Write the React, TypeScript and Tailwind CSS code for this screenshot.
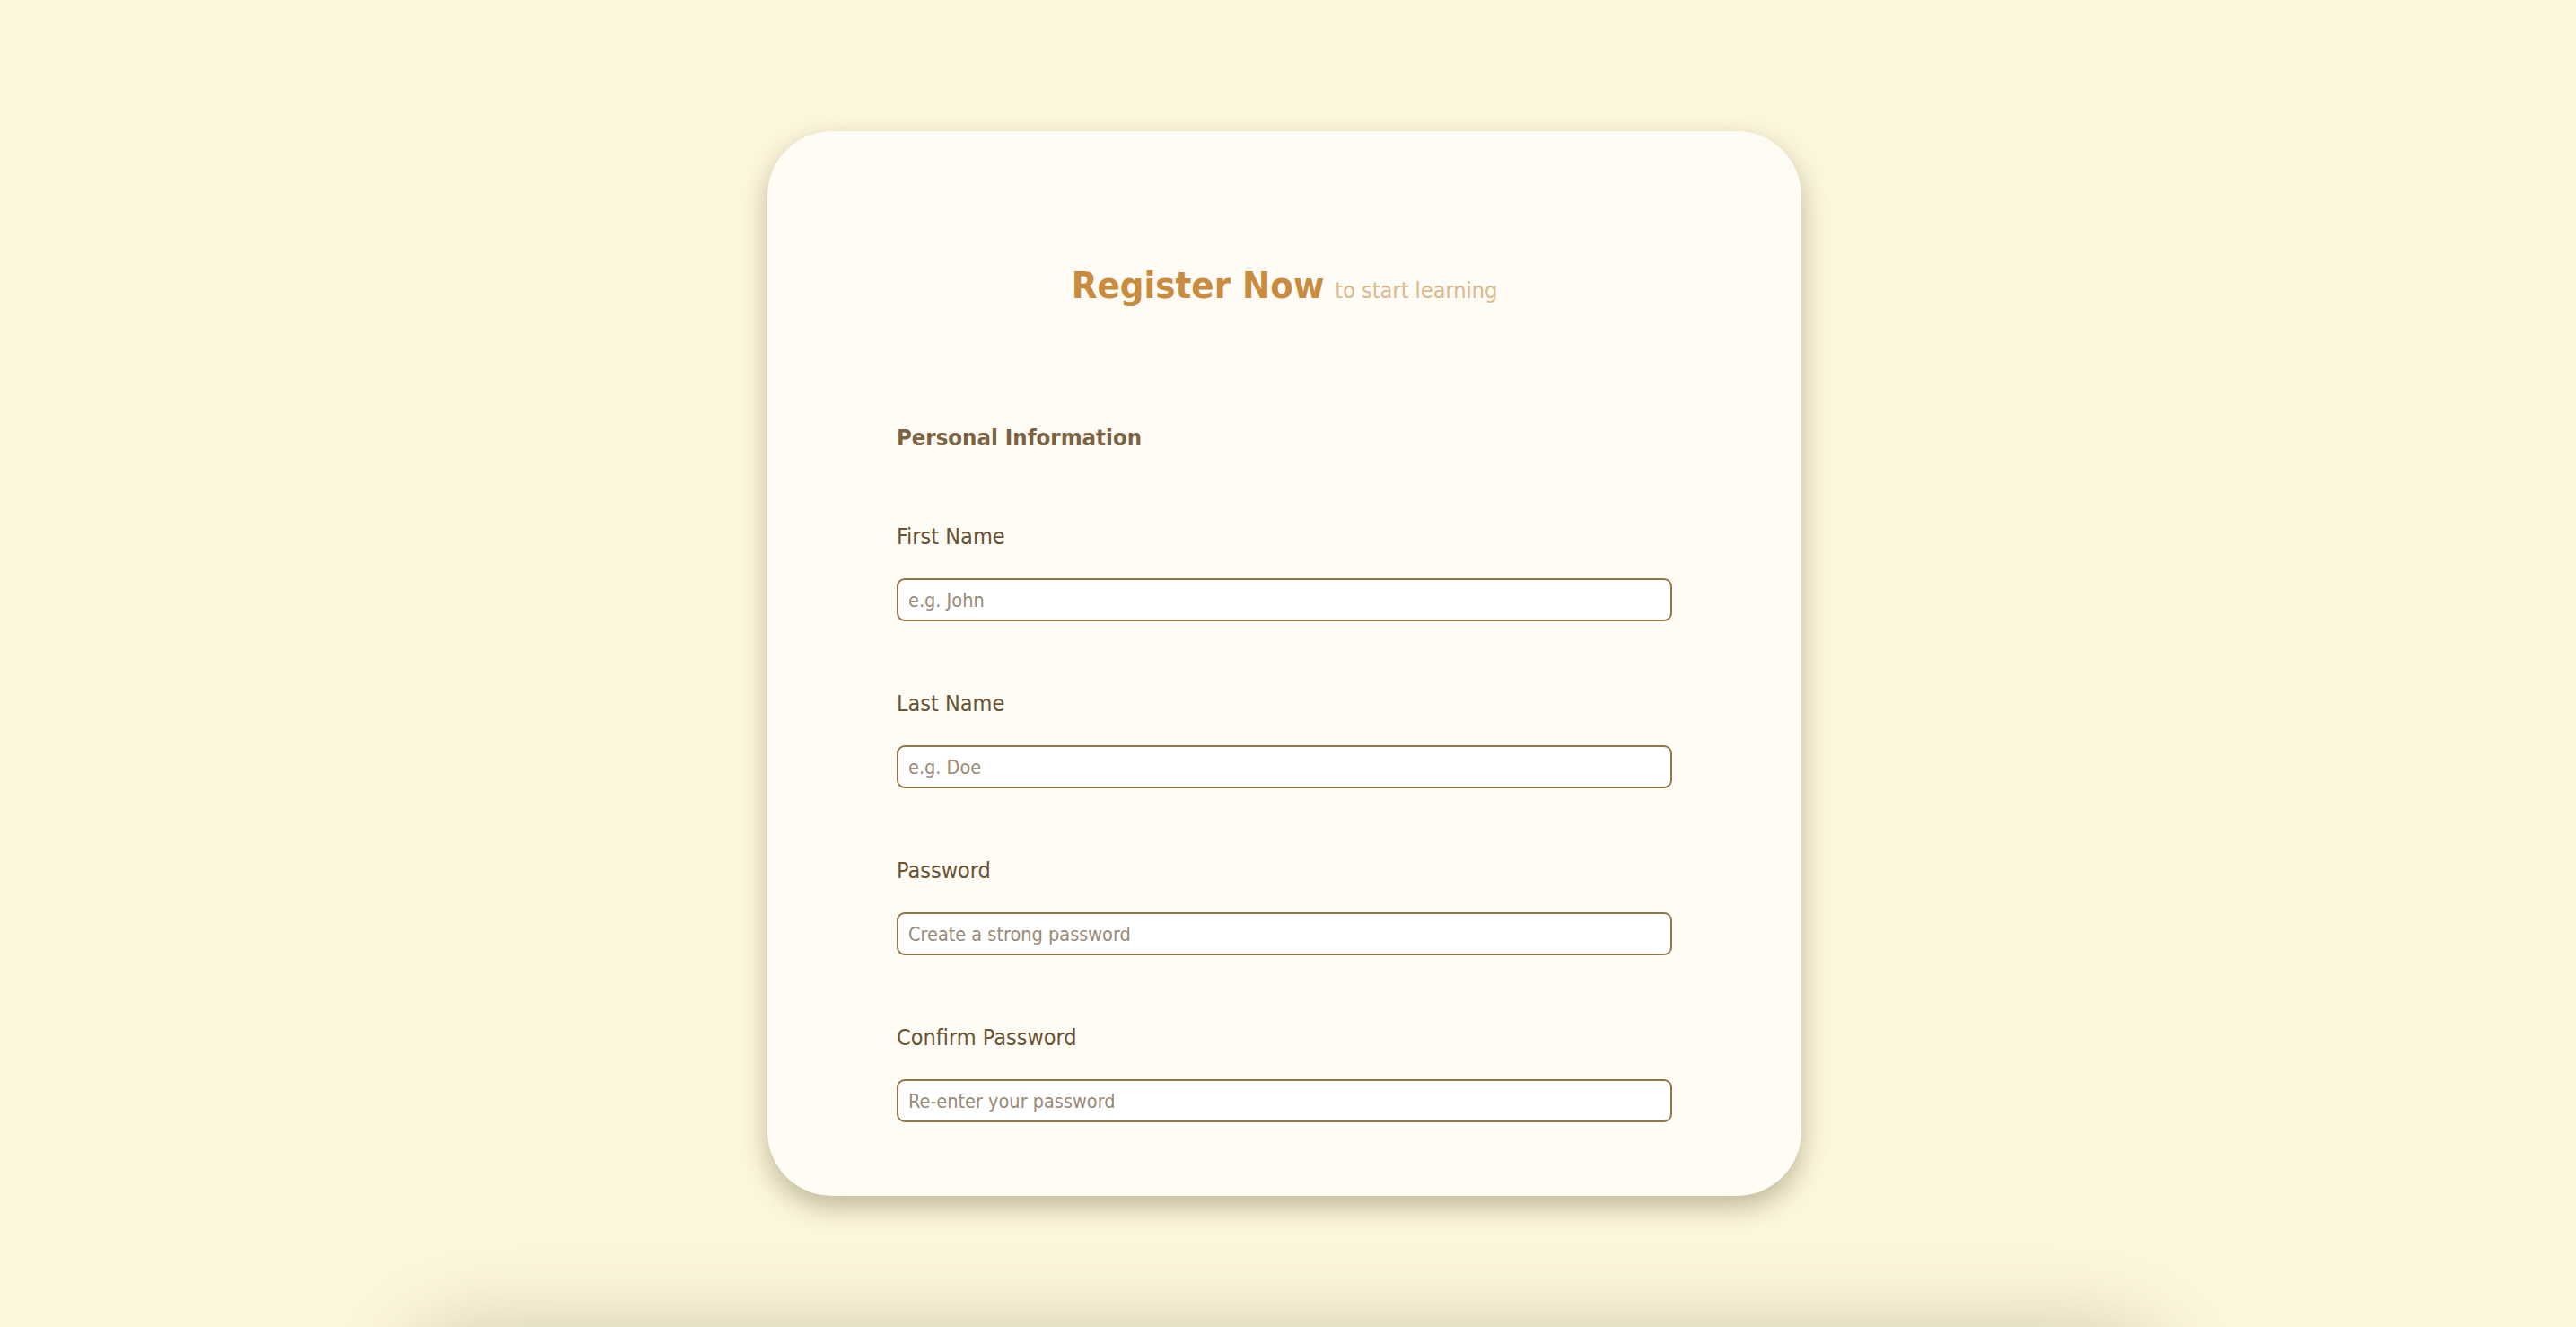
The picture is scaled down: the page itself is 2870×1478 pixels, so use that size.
import React from "react";

const font = "font-['DejaVu_Sans_Condensed','DejaVu_Sans',sans-serif]";

interface FieldProps {
  label: string;
  placeholder: string;
  type?: string;
}

const Field: React.FC<FieldProps> = ({ label, placeholder, type = "text" }) => (
  <div className="flex flex-col">
    <label className="text-[25px] leading-[28px] text-[#6b5332]">{label}</label>
    <input
      type={type}
      placeholder={placeholder}
      className={`mt-[32px] h-[48px] w-full rounded-[9px] border-2 border-[#94754a] bg-white px-[11px] text-[21.5px] text-[#5a4630] outline-none placeholder:text-[#9a8b78] ${font}`}
    />
  </div>
);

const App = () => (
  <div className={`min-h-screen overflow-hidden bg-[#fdf7dd] pt-[146px] pr-2 pb-20 ${font}`}>
    <div className="flex flex-col items-center">
      <div className="w-[1152px] rounded-[72px] bg-[#fffbf5] px-[144px] pt-[148px] pb-[82px] shadow-[0_12px_30px_rgba(90,80,40,0.38)]">
        <h1 className="text-center text-[41.5px] leading-[48px]">
          <span className="font-bold text-[#c98b3e]">Register Now</span>{" "}
          <span className="text-[25px] leading-none text-[#dcb98b]">to start learning</span>
        </h1>

        <h2 className="mt-[129px] text-[25.5px] font-bold leading-[32px] text-[#7b6342]">
          Personal Information
        </h2>

        <div className="mt-[81px] flex flex-col gap-[78px]">
          <Field label="First Name" placeholder="e.g. John" />
          <Field label="Last Name" placeholder="e.g. Doe" />
          <Field label="Password" placeholder="Create a strong password" type="password" />
          <Field label="Confirm Password" placeholder="Re-enter your password" type="password" />
        </div>
      </div>

      <div className="mt-[150px] h-[600px] w-[1960px] shrink-0 rounded-[72px] bg-[#fffbf5] shadow-[0_0_100px_rgba(90,80,40,0.28)]" />
    </div>
  </div>
);

export default App;
